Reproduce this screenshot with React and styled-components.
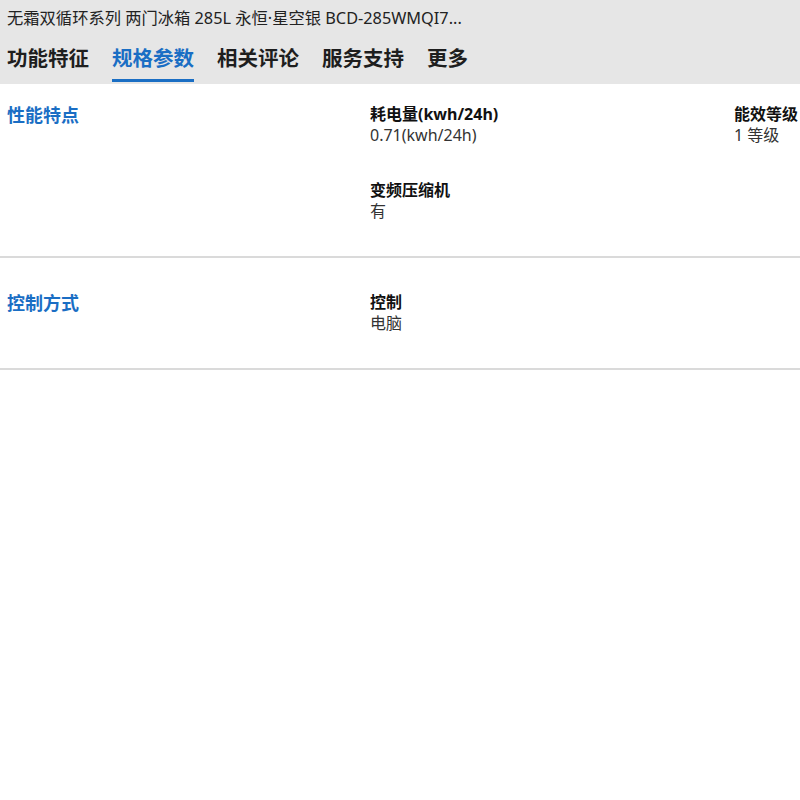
import React from 'react'
import styled, { createGlobalStyle } from 'styled-components'

const GlobalStyle = createGlobalStyle`
	html, body {
		margin: 0;
		padding: 0;
		background: #fff;
	}
	body {
		font-family: "Noto Sans", "Noto Sans CJK SC", sans-serif;
		color: #222;
	}
`

const tabs = ['功能特征', '规格参数', '相关评论', '服务支持', '更多']

const sections = [
	{
		title: '性能特点',
		specs: [
			{ label: '耗电量(kwh/24h)', value: '0.71(kwh/24h)' },
			{ label: '能效等级', value: '1 等级' },
			{ label: '变频压缩机', value: '有' },
		],
	},
	{
		title: '控制方式',
		specs: [{ label: '控制', value: '电脑' }],
	},
]

const App = () => {
	return (
		<>
			<GlobalStyle />
			<Header>
				<ProductName>无霜双循环系列 两门冰箱 285L 永恒·星空银 BCD-285WMQI7...</ProductName>
				<Tabs>
					{tabs.map((t, i) => (
						<Tab key={t} active={i === 1}>{t}</Tab>
					))}
				</Tabs>
			</Header>
			{sections.map((s, i) => (
				<Section key={s.title} first={i === 0}>
					<SectionTitle>{s.title}</SectionTitle>
					<SpecGrid>
						{s.specs.map(spec => (
							<Spec key={spec.label}>
								<Label>{spec.label}</Label>
								<Value>{spec.value}</Value>
							</Spec>
						))}
					</SpecGrid>
				</Section>
			))}
		</>
	)
}

export default App

const Header = styled.div`
	background: #e6e6e6;
	padding: 7px 0 0 7px;
`
const ProductName = styled.div`
	font-size: 16.3px;
	line-height: 22px;
	color: #222;
	white-space: nowrap;
`
const Tabs = styled.div`
	display: flex;
	gap: 23px;
	margin-top: 15px;
`
const Tab = styled.div`
	font-size: 20.5px;
	font-weight: 700;
	line-height: 28px;
	padding-bottom: 7px;
	color: ${p => (p.active ? '#1a6ec4' : '#1e1e1e')};
	border-bottom: 3px solid ${p => (p.active ? '#1a6ec4' : 'transparent')};
	margin-bottom: 2px;
`
const Section = styled.div`
	display: grid;
	grid-template-columns: 363px 1fr;
	padding: ${p => (p.first ? '20px' : '34px')} 0 34px 7px;
	border-bottom: 2px solid #dadada;
`
const SectionTitle = styled.h3`
	margin: 0;
	font-size: 18px;
	font-weight: 700;
	line-height: 22px;
	color: #1a6ec4;
`
const SpecGrid = styled.div`
	display: grid;
	grid-template-columns: 364px 1fr;
	row-gap: 34px;
`
const Spec = styled.div`
	display: flex;
	flex-direction: column;
`
const Label = styled.div`
	font-size: 16px;
	font-weight: 700;
	line-height: 20px;
	color: #111;
`
const Value = styled.div`
	font-size: 16px;
	line-height: 22px;
	color: #333;
`
